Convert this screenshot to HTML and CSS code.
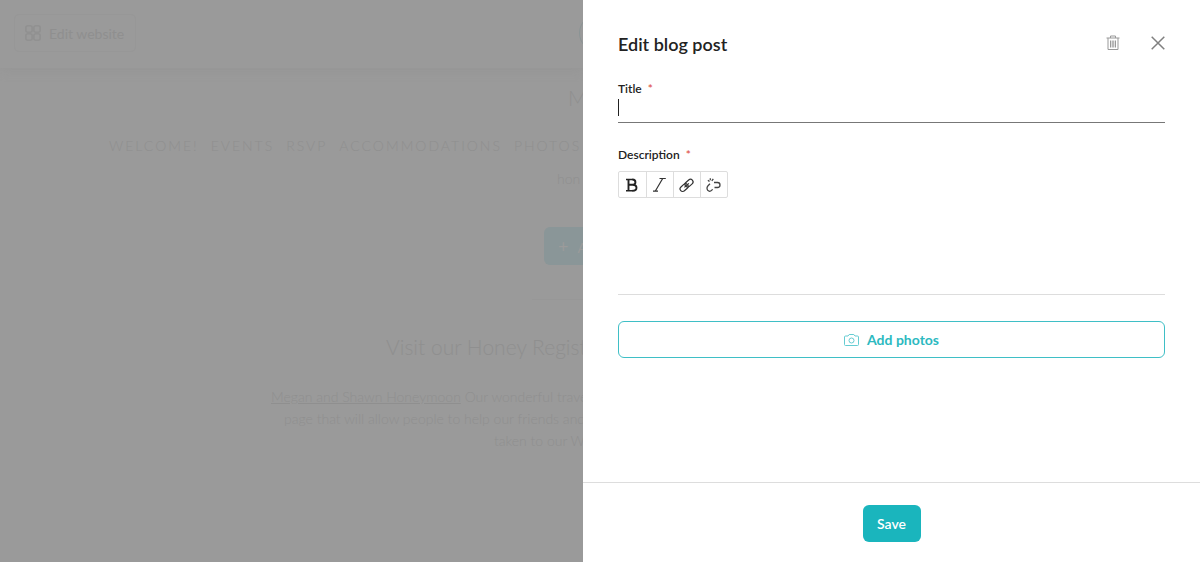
FILE: index.html
```html
<!DOCTYPE html>
<html lang="en">
<head>
    <meta charset="UTF-8">
    <meta name="viewport" content="width=device-width, initial-scale=1.0">
    <title>Edit blog post</title>
    <link rel="stylesheet" href="styles.css">
</head>
<body>

    <!-- Website behind the drawer -->
    <div class="site">
        <header class="site-header">
            <button type="button" class="edit-website">
                <svg width="16" height="16" viewBox="0 0 18 18" fill="none" stroke="currentColor" stroke-width="1.5">
                    <rect x="1" y="1" width="7" height="7" rx="1.5"/>
                    <rect x="10" y="1" width="7" height="7" rx="1.5"/>
                    <rect x="1" y="10" width="7" height="7" rx="1.5"/>
                    <rect x="10" y="10" width="7" height="7" rx="1.5"/>
                </svg>
                Edit website
            </button>
            <button type="button" class="round-btn" aria-label="Preview"></button>
        </header>
        <main class="site-main">
            <h1 class="site-name">M</h1>
            <nav class="site-nav">
                <a href="#">WELCOME!</a>
                <a href="#">EVENTS</a>
                <a href="#">RSVP</a>
                <a href="#">ACCOMMODATIONS</a>
                <a href="#">PHOTOS</a>
            </nav>
            <p class="site-note">hon</p>
            <button type="button" class="add-post"><span>+</span> A</button>
            <hr class="site-rule">
            <h2 class="registry-title">Visit our Honey Regist</h2>
            <p class="registry-text"><a href="#">Megan and Shawn Honeymoon</a> Our wonderful trave</p>
            <p class="registry-text">page that will allow people to help our friends and f</p>
            <p class="registry-text">taken to our W</p>
        </main>
    </div>

    <!-- Drawer -->
    <form class="drawer">
        <div class="drawer-body">
            <div class="drawer-head">
                <h2 class="drawer-title">Edit blog post</h2>
                <button type="button" class="icon-btn" aria-label="Delete">
                    <svg width="14" height="16" viewBox="0 0 14 16" fill="none" stroke="#999" stroke-width="1">
                        <path d="M0.5 3H13.5M4.5 3V1H9.5V3M2 3V14.5H12V3M4.5 5.5V12.5M6.2 5.5V12.5M7.8 5.5V12.5M9.5 5.5V12.5"/>
                    </svg>
                </button>
                <button type="button" class="icon-btn" aria-label="Close">
                    <svg width="14" height="14" viewBox="0 0 14 14" fill="none" stroke="#808080" stroke-width="1.5">
                        <path d="M0.7 0.7L13.3 13.3M13.3 0.7L0.7 13.3"/>
                    </svg>
                </button>
            </div>

            <label class="field-label" for="title">Title <span class="required">*</span></label>
            <input class="title-input" type="text" id="title" name="title" required>

            <label class="field-label" for="description">Description <span class="required">*</span></label>
            <div class="toolbar">
                <button type="button" aria-label="Bold">
                    <svg width="14" height="16" viewBox="0 0 14 16" fill="none" stroke="#222" stroke-width="1.9">
                        <path stroke-width="1.4" d="M0 2.5H7M0 13.7H7"/>
                        <path d="M2.5 2.5V13.7M2.5 7.8H7M6.5 2.5C10.4 2.5 10.4 7.8 6.5 7.8M6.5 7.8C11.8 7.8 11.8 13.7 6.5 13.7"/>
                    </svg>
                </button>
                <button type="button" aria-label="Italic">
                    <svg width="14" height="16" viewBox="0 0 14 16" fill="none" stroke="#333" stroke-width="1.2">
                        <path d="M6.5 1.5H12.8M0 14.2H5M9.7 1.5L2.2 14.2"/>
                    </svg>
                </button>
                <button type="button" aria-label="Link">
                    <svg width="16" height="16" viewBox="0 0 16 16" fill="none" stroke="#333" stroke-width="1.2">
                        <g transform="rotate(-42 8 8)">
                            <rect x="-0.4" y="5.4" width="9" height="5.2" rx="2.6"/>
                            <rect x="6.2" y="5.4" width="9" height="5.2" rx="2.6"/>
                            <path d="M4.5 8H10.5"/>
                        </g>
                    </svg>
                </button>
                <button type="button" aria-label="Remove link">
                    <svg width="16" height="16" viewBox="0 0 16 16" fill="none" stroke="#444" stroke-width="1.3">
                        <path d="M8 5.5H11.5Q14 5.5 14 8T11.5 10.5H8.5M4 6.8L2 8.8C0.3 10.5 0.8 13.5 3.1 14.2C4.8 14.7 5.8 13.4 6.7 12.3M1.9 3.3L3.5 4.6M4.3 1.3V3.2M5.8 3.8L7.3 1.8"/>
                    </svg>
                </button>
            </div>
            <textarea class="description-input" id="description" name="description" required></textarea>

            <button type="button" class="add-photos">
                <svg width="15" height="12" viewBox="0 0 15 12" fill="none" stroke="#65ccd2" stroke-width="1">
                    <path d="M1.5 2H4L5.2 0.5H9.8L11 2H13.5Q14.5 2 14.5 3V10.5Q14.5 11.5 13.5 11.5H1.5Q0.5 11.5 0.5 10.5V3Q0.5 2 1.5 2Z"/>
                    <circle cx="7.5" cy="6.5" r="2.5"/>
                </svg>
                Add photos
            </button>
        </div>
        <div class="drawer-footer">
            <button type="submit" class="save">Save</button>
        </div>
    </form>

</body>
</html>
```
FILE: styles.css
```css
* {
    box-sizing: border-box;
}
body {
    margin: 0;
    display: flex;
    min-height: 100vh;
    font-family: Lato, "Liberation Sans", sans-serif;
    background-color: #9a9a9a;
    color: #222;
}
h1, h2, p {
    margin: 0;
}
button {
    font-family: inherit;
    cursor: pointer;
}
svg {
    display: block;
    flex: none;
}

/* Website */
.site {
    flex: 1;
    min-width: 0;
    overflow: hidden;
    white-space: nowrap;
    color: #8f8f8f;
}
.site a {
    color: inherit;
}
.site-header {
    display: flex;
    justify-content: space-between;
    height: 68px;
    padding: 14px 0 14px 14px;
    box-shadow: 0 2px 10px #959595;
}
.edit-website {
    display: flex;
    align-items: center;
    gap: 8px;
    height: 38px;
    padding: 0 11px 0 10px;
    border: 1px solid #979797;
    border-radius: 5px;
    background: none;
    color: #8f8f8f;
    font-size: 14px;
}
.round-btn {
    flex: none;
    width: 38px;
    height: 38px;
    margin-right: -34px;
    border: 1px solid #8a9495;
    border-radius: 50%;
    background: none;
}
.site-main {
    font-weight: 300;
}
.site-name {
    padding: 16px 0 0 568px;
    font-size: 21px;
    line-height: 28px;
    font-weight: 300;
}
.site-nav {
    display: flex;
    gap: 12px;
    padding: 22px 0 0 109px;
    font-size: 14px;
    line-height: 24px;
    letter-spacing: 2px;
}
.site-nav a {
    text-decoration: none;
}
.site-note {
    padding: 10px 0 0 557px;
    font-size: 14px;
    line-height: 22px;
}
.add-post {
    display: block;
    width: 96px;
    height: 38px;
    margin: 37px 0 0 544px;
    padding: 0 14px;
    border: 0;
    border-radius: 6px;
    background-color: #8a9698;
    color: #9b9b9b;
    font-size: 14px;
    text-align: left;
}
.add-post span {
    margin-right: 6px;
    font-size: 18px;
}
.site-rule {
    margin: 34px 0 0 532px;
    border: 0;
    border-top: 1px solid #979797;
}
.registry-title {
    padding: 32px 0 24px 386px;
    font-size: 21px;
    line-height: 30px;
    font-weight: 300;
}
.registry-text {
    padding-left: 271px;
    font-size: 14px;
    line-height: 22px;
}
.registry-text + .registry-text {
    padding-left: 284px;
}
.registry-text + .registry-text + .registry-text {
    padding-left: 494px;
}

/* Drawer */
.drawer {
    display: flex;
    flex-direction: column;
    flex: 0 0 617px;
    background-color: #fff;
}
.drawer-body {
    display: flex;
    flex-direction: column;
    flex: 1;
    padding: 32px 35px;
}
.drawer-head {
    display: flex;
    gap: 31px;
    height: 24px;
    margin-bottom: 24px;
}
.drawer-title {
    flex: 1;
    font-size: 18px;
    line-height: 24px;
    font-weight: 600;
}
.icon-btn {
    display: flex;
    align-items: center;
    height: 22px;
    padding: 0;
    border: 0;
    background: none;
}
.field-label {
    font-size: 12px;
    line-height: 18px;
    font-weight: 600;
}
.required {
    margin-left: 3px;
    color: #e0564b;
}
/* Text cursor at the start of the field */
.title-input {
    width: 100%;
    height: 25px;
    margin-bottom: 23px;
    padding: 0;
    border: 0;
    border-bottom: 1px solid #777;
    outline: none;
    background: linear-gradient(#222, #222) 0 1px / 1px 17px no-repeat;
    font: inherit;
    font-size: 14px;
}
.toolbar {
    display: flex;
    align-self: flex-start;
    margin-top: 7px;
    border: 1px solid #ddd;
    border-radius: 2px;
}
.toolbar button {
    display: flex;
    align-items: center;
    justify-content: center;
    width: 27px;
    height: 25px;
    padding: 0;
    border: 0;
    background: none;
}
.toolbar button + button {
    border-left: 1px solid #ddd;
}
.description-input {
    height: 97px;
    margin-bottom: 26px;
    padding: 8px 0;
    border: 0;
    border-bottom: 1px solid #ddd;
    outline: none;
    resize: none;
    font: inherit;
    font-size: 14px;
}
.add-photos {
    display: flex;
    align-items: center;
    justify-content: center;
    gap: 8px;
    height: 37px;
    border: 1px solid #3fbfc6;
    border-radius: 6px;
    background-color: #fff;
    color: #2cb9c0;
    font-size: 14px;
    font-weight: 700;
}
.drawer-footer {
    display: flex;
    justify-content: center;
    padding: 22px 0 20px;
    border-top: 1px solid #ddd;
}
.save {
    width: 58px;
    height: 37px;
    padding: 0;
    border: 0;
    border-radius: 6px;
    background-color: #1ab5bd;
    color: #fff;
    font-size: 14px;
    font-weight: 600;
}
```
